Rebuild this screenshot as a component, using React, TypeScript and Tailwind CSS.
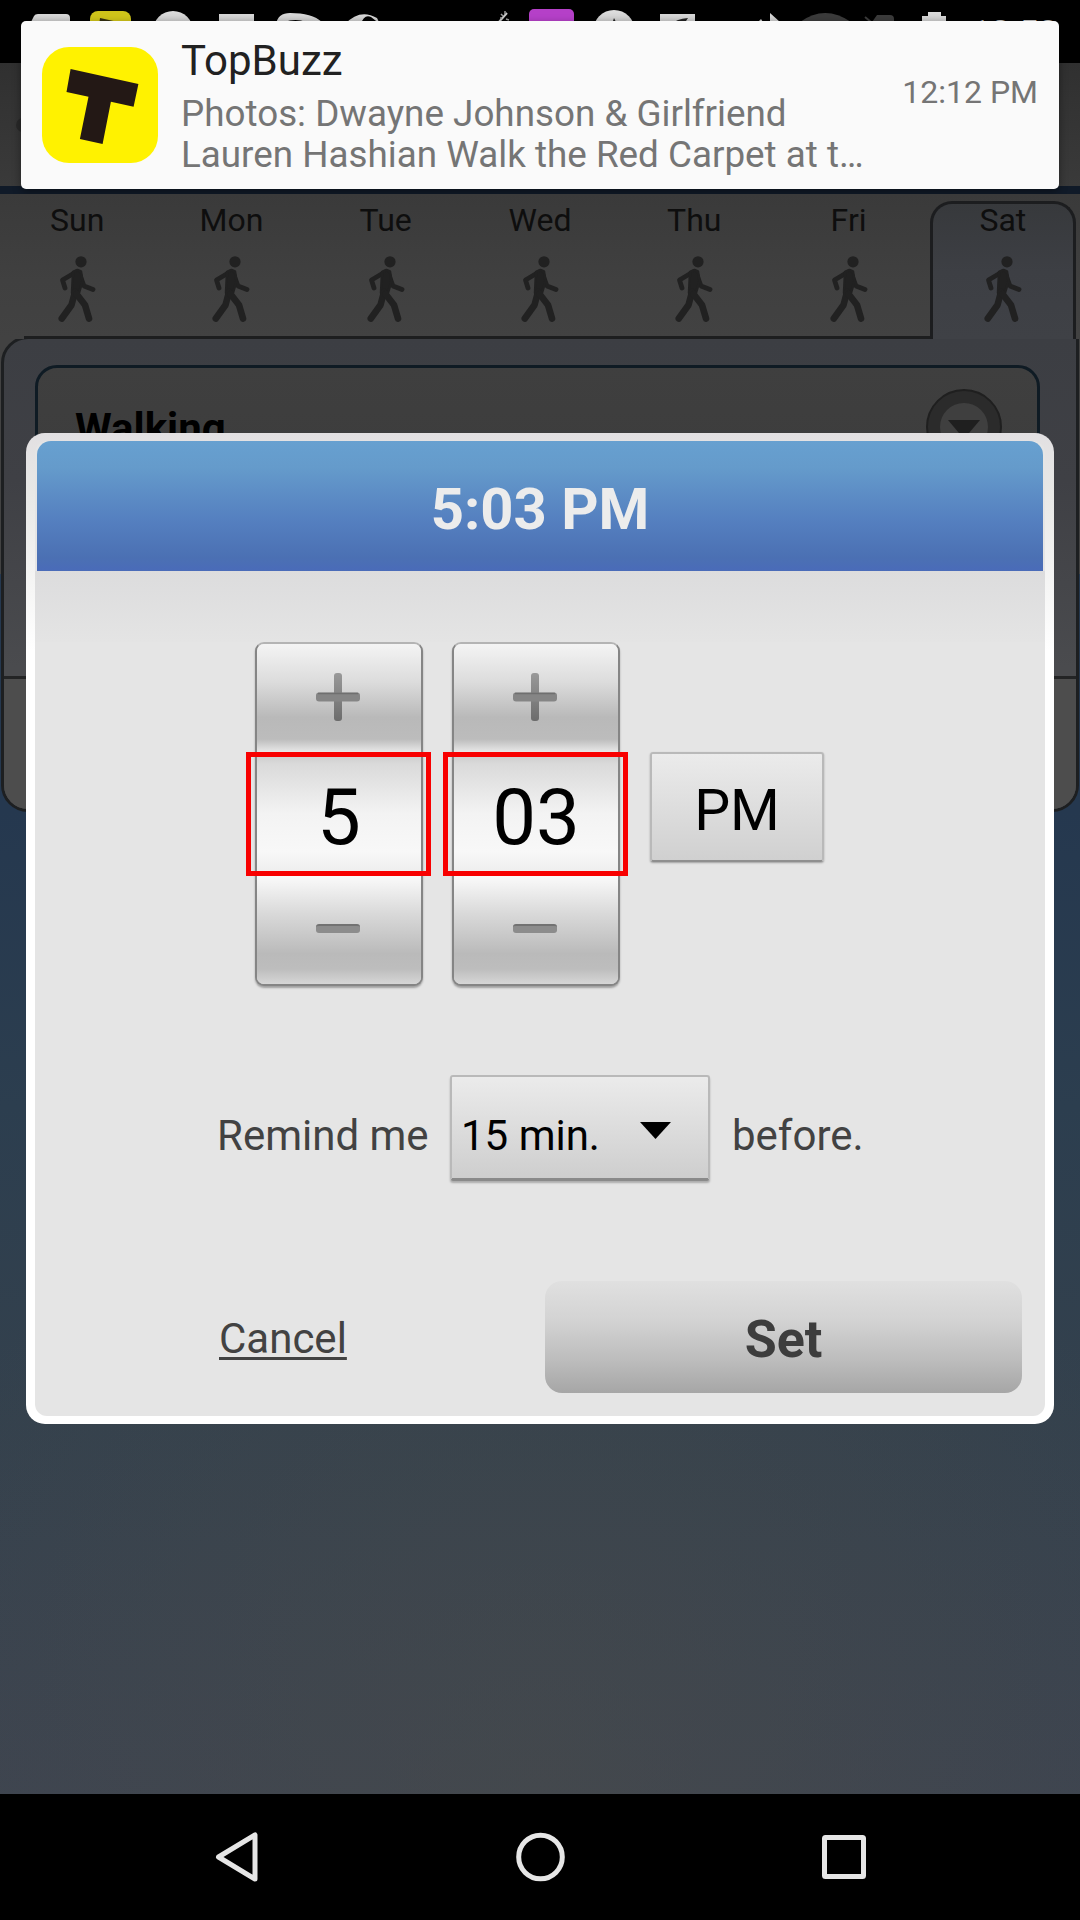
import React from "react";

const DAYS = ["Sun", "Mon", "Tue", "Wed", "Thu", "Fri", "Sat"];

function Walker() {
  return (
    <svg className="mt-[9px]" width="38" height="67" viewBox="0 0 38 67" fill="none" stroke="#212121" strokeLinecap="round" strokeLinejoin="round">
      <circle cx="23" cy="5.800" r="5.600" fill="#212121" stroke="none" />
      <path d="M18 16 L4.500 24 L7 32" strokeWidth="4.800" />
      <path d="M21.500 18 L26 30 L35 33.500" strokeWidth="4.800" />
      <path d="M15 16 L19.500 14 L23 15.500 L24.500 25 L21 37 L14 37 Z" fill="#212121" strokeWidth="2.500" />
      <path d="M17 36 L13.500 49 L3.800 62.500" strokeWidth="6.600" />
      <path d="M18.500 38 L27 49 L31 62.500" strokeWidth="6.600" />
    </svg>
  );
}

function StatusBar() {
  return (
    <div className="h-[63px] shrink-0 bg-black">
      <svg className="block" width="1080" height="63" viewBox="0 0 1080 63">
        <defs>
          <linearGradient id="sg" x1="0" y1="10" x2="0" y2="40" gradientUnits="userSpaceOnUse">
            <stop offset="0" stopColor="#e0e0e0" />
            <stop offset="1" stopColor="#a8a8a8" />
          </linearGradient>
        </defs>
        <g fill="url(#sg)">
          <path d="M30 24 L34 16 Q35 14 38 14 H66 Q70 14 70 18 V36 H30 Z" />
          <circle cx="173" cy="31" r="20" />
          <path d="M219 14 H254 V21 L240 21 L236 36 H219 Z" />
          <path d="M276 24 Q278 13 290 13 Q312 13 322 22 L306 22 Q296 18 284 22 V36 H276 Z" />
          <path d="M345 24 Q360 8 377 18 L380 24 L371 17 Q364 14 361 24 Z" />
          <circle cx="614" cy="31" r="21" />
          <path d="M660 14 H695 V36 H660 Z" />
          <path d="M770 13 L780 22 H770 Z" />
          <path d="M758 22 L761 19 L763 22 Z" />
          <path d="M922 16 H928 V12 H941 V16 H946 V36 H922 Z" />
        </g>
        <path d="M672 24 Q676 19 688 18 L684 24 Z" fill="#222" />
        <path d="M612 24 L614 18 L617 24 Z" fill="#222" />
        <path d="M498 23 L507 13" stroke="#c8c8c8" strokeWidth="2" />
        <path d="M501 14 l2 2 M506 19 l3 1 M505 11 v3 M500 18 h2" stroke="#999" strokeWidth="1.500" />
        <rect x="90" y="11" width="41" height="30" rx="8" fill="#cfc41a" />
        <path d="M100 18 L118 22 V26 H99 Z" fill="#332f10" />
        <rect x="529" y="9" width="45" height="30" rx="5" fill="#b540c8" />
        <path d="M800 22 Q825 4 851 22 L840 36 H812 Z" fill="#3b3b3b" />
        <path d="M865 17 l6 5" stroke="#3b3b3b" strokeWidth="2" />
        <path d="M872 22 L877 15 H890 Q894 15 894 19 V30 H872 Z" fill="#3b3b3b" />
        <text x="971" y="44.500" fontSize="35" fontFamily="Roboto" fill="#c4c4c4">12:53</text>
      </svg>
    </div>
  );
}

function Notification() {
  return (
    <div className="absolute left-[21px] top-[21px] flex h-[168px] w-[1038px] rounded-[5px] bg-[#fafafa] shadow-[0_3px_8px_rgba(0,0,0,0.4)]">
      <svg className="ml-[21px] mt-[26px] shrink-0" width="116" height="116" viewBox="42 47 116 116">
        <rect x="42" y="47" width="116" height="116" rx="27" fill="#fff200" />
        <path d="M70.600 69 L138.400 84 L133.600 106.700 L110.900 101.700 L102.600 144 L79.900 139 L88.500 96.700 L66.500 92 Z" fill="#231815" />
      </svg>
      <div className="ml-[23px] mt-[16px] w-[710px]">
        <div className="text-[42px] leading-[48px] text-[#212121]">TopBuzz</div>
        <div className="mt-[8px] whitespace-nowrap text-[36.8px] leading-[41px] text-[#757575]">
          Photos: Dwayne Johnson &amp; Girlfriend
          <br />
          Lauren Hashian Walk the Red Carpet at t…
        </div>
      </div>
      <div className="ml-auto mr-[21px] mt-[51px] text-[32px] leading-[40px] text-[#757575]">12:12 PM</div>
    </div>
  );
}

function WeekTabs() {
  return (
    <div className="relative z-10 -mb-[3px] grid h-[145px] grid-cols-7 bg-[linear-gradient(#3a3a3a,#404040_60%,#424242)]">
      {DAYS.map((day) => (
        <div key={day} className="relative flex flex-col items-center">
          {day === "Sat" && (
            <div className="absolute left-[4px] top-[7px] h-[138px] w-[146px] rounded-t-[22px] border-[3px] border-b-0 border-[#1c1d1f] bg-[linear-gradient(#37393c,#3d3f44_50%,#3f4146)]" />
          )}
          <div className="relative text-[32px] leading-[53px] text-[#0e0e0e]">{day}</div>
          <div className="relative">
            <Walker />
          </div>
          {day === "Sun" && <div className="absolute bottom-0 left-[24px] right-0 h-[3px] bg-[#1d1e1f]" />}
          {day !== "Sun" && day !== "Sat" && (
            <div className="absolute -right-[6px] bottom-0 left-0 h-[3px] bg-[#1d1e1f]" />
          )}
        </div>
      ))}
    </div>
  );
}

function ActivityPanel() {
  return (
    <div className="relative h-[476px] bg-[linear-gradient(#424242_50%,#25384f_50%)]">
      <div className="ml-[1px] flex h-full w-[1078px] flex-col overflow-hidden rounded-b-[27px] rounded-tl-[27px] border-[3px] border-[#1d1f21] bg-[linear-gradient(#3c3e43,#3f4045_30%,#4a4b4e_70%)]">
        <div className="ml-[31px] mr-[36px] mt-[26px] flex h-[260px] justify-between rounded-[22px] border-[3px] border-[#0f1b24] bg-[linear-gradient(#3f3f3f,#393939)]">
          <div className="ml-[37px] mt-[36px] text-[42px] font-bold leading-[50px] text-black">Walking</div>
          <svg className="mr-[35px] mt-[21px]" width="76" height="76" viewBox="0 0 76 76">
            <circle cx="38" cy="38" r="37" fill="#2b2b2b" stroke="#1f1f1f" strokeWidth="2" />
            <circle cx="38" cy="38" r="24" fill="#3f3f3f" />
            <path d="M22 31 H54 L38 50 Z" fill="#1f1f1f" />
          </svg>
        </div>
        <div className="mt-auto h-[133px] border-t-[3px] border-[#232425] bg-[#4d4d4d]" />
      </div>
    </div>
  );
}

function Stepper({ value }: { value: string }) {
  return (
    <div className="relative h-[344px] w-[168px] rounded-[9px] border-2 border-[#858585] border-t-[#b4b4b4] bg-[#e5e5e5] shadow-[0_2px_2px_rgba(0,0,0,0.3)]">
      <div className="flex h-[108px] justify-center rounded-t-[7px] bg-[linear-gradient(#f4f4f4,#dcdcdc_35%,#b9b9b9_68%,#bcbcbc_88%,#e8e8e8)]">
        <svg className="-ml-[2px] mt-[29px]" width="44" height="48" viewBox="0 0 44 48">
          <defs>
            <linearGradient id="pg" x1="0" y1="0" x2="0" y2="1">
              <stop offset="0" stopColor="#999" />
              <stop offset="1" stopColor="#6c6c6c" />
            </linearGradient>
          </defs>
          <rect x="18" y="0" width="8" height="48" rx="3" fill="url(#pg)" />
          <rect x="0" y="19.500" width="44" height="9" rx="3" fill="#858585" />
          <path d="M2 20.500 H42" stroke="#6f6f6f" strokeWidth="1.500" />
        </svg>
      </div>
      <div className="flex h-[124px] justify-center bg-[linear-gradient(#c9c9c9,#dadada_10%,#f3f3f3_50%,#f8f8f8_80%,#ececec)]">
        <span className="pt-[20px] text-[78px] leading-[92px] text-black">{value}</span>
      </div>
      <div className="flex h-[108px] justify-center rounded-b-[7px] bg-[linear-gradient(#fafafa,#d9d9d9_35%,#bababa_72%,#bdbdbd_86%,#d6d6d6)]">
        <div className="-ml-[2px] mt-[48px] h-[9px] w-[44px] rounded-[3px] border-t-2 border-[#727272] bg-[#8c8c8c]" />
      </div>
      <div className="absolute -left-[11px] top-[108px] h-[124px] w-[185px] border-[5px] border-[#f80000]" />
    </div>
  );
}

function Dialog() {
  return (
    <div className="absolute left-[26px] top-[433px] h-[991px] w-[1028px] rounded-[19px] bg-[linear-gradient(#e2e0e2,#e8e8e6_6%,#ffffff_22%)] px-[9px] py-2">
      <div className="flex h-full flex-col rounded-[12px] bg-[#e5e5e5]">
        <div className="mx-[2px] h-[130px] rounded-t-[14px] bg-[linear-gradient(#67a0d0,#659bcb_20%,#5580c0_60%,#4b70b3_90%,#4a6bb9)] text-center text-[58px] font-bold leading-[136px] text-[#ececec]">
          5:03 PM
        </div>
        <div className="h-[71px] bg-[linear-gradient(#dcdcdd,#e4e4e4)]" />
        <div className="flex h-[344px] gap-[29px] pl-[220px]">
          <Stepper value="5" />
          <Stepper value="03" />
          <div className="ml-px mt-[110px] h-[110px] w-[174px] rounded-[3px] border-2 border-[#b9b9b9] border-b-[#8f8f8f] bg-[linear-gradient(#ebebeb,#d0d0d0)] text-center text-[57px] leading-[113px] text-black shadow-[0_1px_2px_rgba(0,0,0,0.3)]">
            PM
          </div>
        </div>
        <div className="mt-[89px] flex h-[106px] text-[42px] leading-[122px] text-[#424242]">
          <span className="w-[415px] shrink-0 pl-[182px]">Remind me</span>
          <div className="flex h-[106px] w-[260px] rounded-[3px] border-2 border-[#b9b9b9] border-b-[3px] border-b-[#8a8a8a] bg-[linear-gradient(#ebebeb,#cecece)] pl-[9px] text-black shadow-[0_2px_2px_rgba(0,0,0,0.25)]">
            <span className="w-[179px] leading-[118px]">15 min.</span>
            <svg className="mt-[45px]" width="31" height="17" viewBox="0 0 32 17" preserveAspectRatio="none">
              <path d="M0 0 H32 L16 17 Z" fill="#000" />
            </svg>
          </div>
          <span className="ml-[22px]">before.</span>
        </div>
        <div className="mt-[100px] flex h-[112px]">
          <span className="w-[510px] pl-[184px] text-[42px] leading-[115px] text-[#424242] underline decoration-[3px] underline-offset-[4px]">
            Cancel
          </span>
          <div className="h-[112px] w-[477px] rounded-[17px] bg-[linear-gradient(#e0e0e0,#d3d3d3_35%,#bdbdbd_70%,#a6a6a6)] text-center text-[52px] font-bold leading-[117px] text-[#3d3d3d]">
            Set
          </div>
        </div>
      </div>
    </div>
  );
}

function NavBar() {
  return (
    <div className="grid h-[126px] shrink-0 grid-cols-[215px_301px_306px_1fr] bg-black pt-[38px]">
      <span />
      <svg width="44" height="50" viewBox="0 0 44 50" fill="none" stroke="#e6e6e6" strokeWidth="5" strokeLinejoin="round">
        <path d="M3.500 25 L40 3 V47 Z" />
      </svg>
      <svg width="49" height="50" viewBox="0 0 49 50" fill="none" stroke="#e6e6e6" strokeWidth="5">
        <circle cx="24.500" cy="25" r="21.800" />
      </svg>
      <svg width="44" height="50" viewBox="0 0 44 50" fill="none" stroke="#e6e6e6" strokeWidth="5" strokeLinejoin="round">
        <rect x="2.500" y="5.500" width="39" height="39" rx="1" />
      </svg>
    </div>
  );
}

export default function App() {
  return (
    <div className="relative flex h-[1920px] w-[1080px] flex-col overflow-hidden bg-black font-[Roboto,sans-serif]">
      <StatusBar />
      <div className="flex h-[123px] shrink-0 items-center bg-[linear-gradient(#303030,#3a3a3a)] pl-[16px]">
        <div className="h-[14px] w-[14px] rounded-full bg-[#292929]" />
      </div>
      <div className="h-[8px] shrink-0 bg-[#101a28]" />
      <WeekTabs />
      <ActivityPanel />
      <div className="flex-1 bg-[radial-gradient(ellipse_700px_700px_at_50%_100%,rgba(74,76,74,0.5),transparent),linear-gradient(#25384f,#2c3e4f_30%,#34414d_62%,#3d4450_100%)]" />
      <NavBar />
      <Dialog />
      <Notification />
    </div>
  );
}
